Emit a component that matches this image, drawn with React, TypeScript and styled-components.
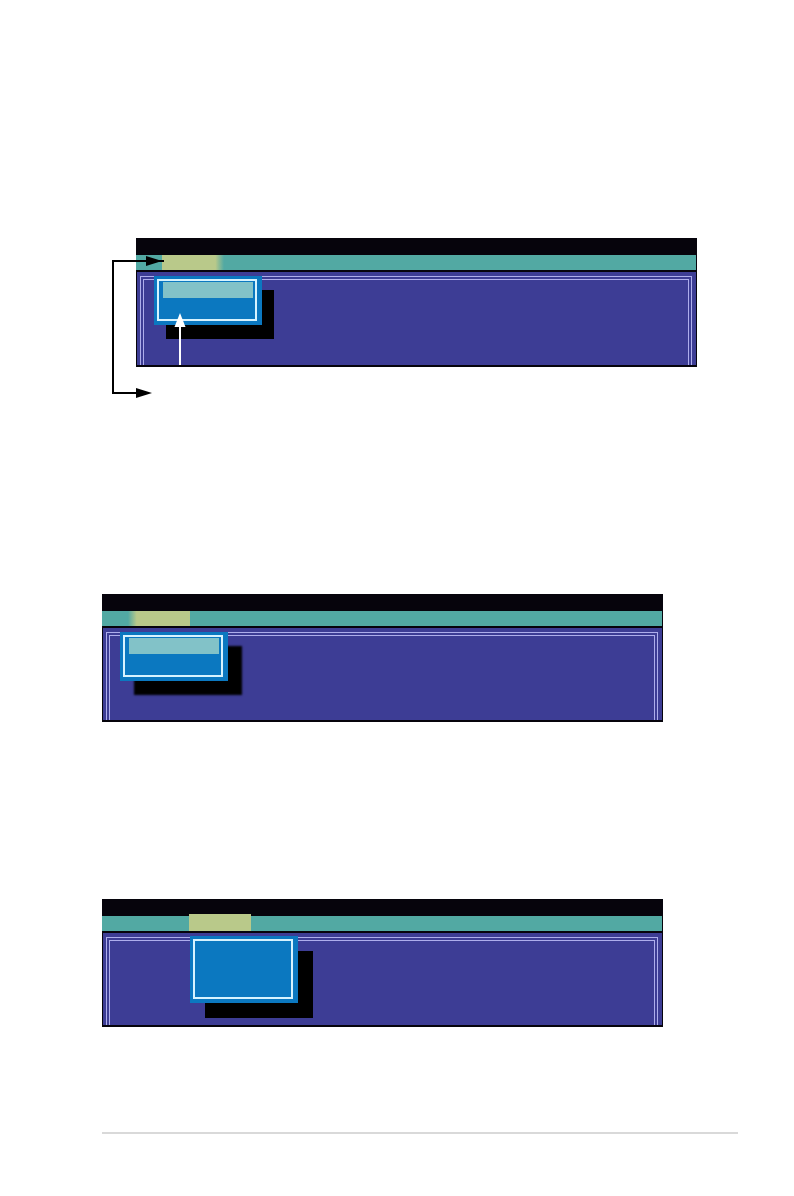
import React from "react";
import styled, { createGlobalStyle } from "styled-components";

const GlobalStyle = createGlobalStyle`
  html, body {
    margin: 0;
    padding: 0;
    background: #ffffff;
    font-family: "Liberation Sans", Arial, sans-serif;
  }
`;

const Page = styled.div`
  width: 794px;
  height: 1196px;
  padding-top: 238px;
  box-sizing: border-box;
  display: flex;
  flex-direction: column;
  align-items: flex-start;
`;

const Figure = styled.div<{ $left: number; $top: number }>`
  position: relative;
  margin-left: ${(p) => p.$left}px;
  margin-top: ${(p) => p.$top}px;
`;

const Screen = styled.div<{ $bodyHeight: number }>`
  width: 561px;
  background: #06040c;
  padding: 17px 1px 2px 0;
  box-sizing: border-box;
  display: flex;
  flex-direction: column;
  gap: 2px;

  & > div:last-child {
    height: ${(p) => p.$bodyHeight}px;
  }
`;

const MenuBar = styled.div`
  height: 15px;
  background: #52a9a3;
  display: flex;
  align-items: flex-end;
`;

const Tab = styled.div<{ $left: number; $fade: "left" | "right" | "none" }>`
  margin-left: ${(p) => p.$left}px;
  width: 62px;
  height: ${(p) => (p.$fade === "none" ? 17 : 15)}px;
  background: ${(p) =>
    p.$fade === "right"
      ? "linear-gradient(to right, #b9c98a 0%, #b9c98a 86%, #52a9a3 100%)"
      : p.$fade === "left"
      ? "linear-gradient(to right, #52a9a3 0%, #b9c98a 14%, #b9c98a 100%)"
      : "#b9c98a"};
`;

const Body = styled.div`
  margin-left: 1px;
  background: #3d3d95;
  position: relative;
  overflow: hidden;
`;

const Frame = styled.div`
  position: absolute;
  top: 4px;
  left: 3px;
  right: 4px;
  bottom: -10px;
  border: 4px double #aeaeec;
`;

const PopupSlot = styled.div<{ $left: number; $top: number }>`
  position: relative;
  padding-left: ${(p) => p.$left}px;
  padding-top: ${(p) => p.$top}px;
  display: flex;
`;

const Popup = styled.div<{ $height: number; $blur: number; $dx: number; $dy: number }>`
  width: 108px;
  height: ${(p) => p.$height}px;
  box-sizing: border-box;
  background: #0b78c0;
  padding: 3px 5px 4px 3px;
  box-shadow: ${(p) => `${p.$dx}px ${p.$dy}px ${p.$blur}px #000`};
  display: flex;
`;

const PopupInner = styled.div`
  flex: 1;
  border: 2px solid #d6f3ff;
  padding: 1px 2px 0 4px;
  display: flex;
  flex-direction: column;
`;

const Highlight = styled.div`
  height: 16px;
  background: #82c2c8;
`;

const Overlay = styled.svg`
  position: absolute;
  left: 0;
  top: 0;
  overflow: visible;
  pointer-events: none;
`;

const FooterRule = styled.div`
  margin-top: 105px;
  margin-left: 102px;
  width: 636px;
  height: 2px;
  background: #d9d9d9;
`;

type ScreenSpec = {
  left: number;
  top: number;
  bodyHeight: number;
  tabLeft: number;
  fade: "left" | "right" | "none";
  popupLeft: number;
  popupTop: number;
  popupHeight: number;
  highlight: boolean;
  blur: number;
  dx: number;
  dy: number;
};

const screens: ScreenSpec[] = [
  { left: 136, top: 0, bodyHeight: 93, tabLeft: 26, fade: "right", popupLeft: 17, popupTop: 4, popupHeight: 49, highlight: true, blur: 0, dx: 12, dy: 14 },
  { left: 102, top: 227, bodyHeight: 92, tabLeft: 26, fade: "left", popupLeft: 17, popupTop: 4, popupHeight: 49, highlight: true, blur: 2, dx: 14, dy: 14 },
  { left: 102, top: 177, bodyHeight: 92, tabLeft: 87, fade: "none", popupLeft: 87, popupTop: 3, popupHeight: 67, highlight: false, blur: 0, dx: 15, dy: 15 },
];

// arrows drawn relative to the top-left corner of the first screen
const Callouts: React.FC = () => (
  <Overlay width="561" height="160">
    <path d="M28 23 H-23 V155 H2" fill="none" stroke="#000" strokeWidth="2" />
    <polygon points="10,18 26,23 10,28" fill="#000" />
    <polygon points="0,150 16,155 0,160" fill="#000" />
    <line x1="44" y1="127" x2="44" y2="86" stroke="#fff" strokeWidth="2" />
    <polygon points="38.5,89 44,75 49.5,89" fill="#fff" />
  </Overlay>
);

const App: React.FC = () => (
  <>
    <GlobalStyle />
    <Page>
      {screens.map((s, i) => (
        <Figure key={i} $left={s.left} $top={s.top}>
          <Screen $bodyHeight={s.bodyHeight}>
            <MenuBar>
              <Tab $left={s.tabLeft} $fade={s.fade} />
            </MenuBar>
            <Body>
              <Frame />
              <PopupSlot $left={s.popupLeft} $top={s.popupTop}>
                <Popup $height={s.popupHeight} $blur={s.blur} $dx={s.dx} $dy={s.dy}>
                  <PopupInner>{s.highlight && <Highlight />}</PopupInner>
                </Popup>
              </PopupSlot>
            </Body>
          </Screen>
          {i === 0 && <Callouts />}
        </Figure>
      ))}
      <FooterRule />
    </Page>
  </>
);

export default App;
